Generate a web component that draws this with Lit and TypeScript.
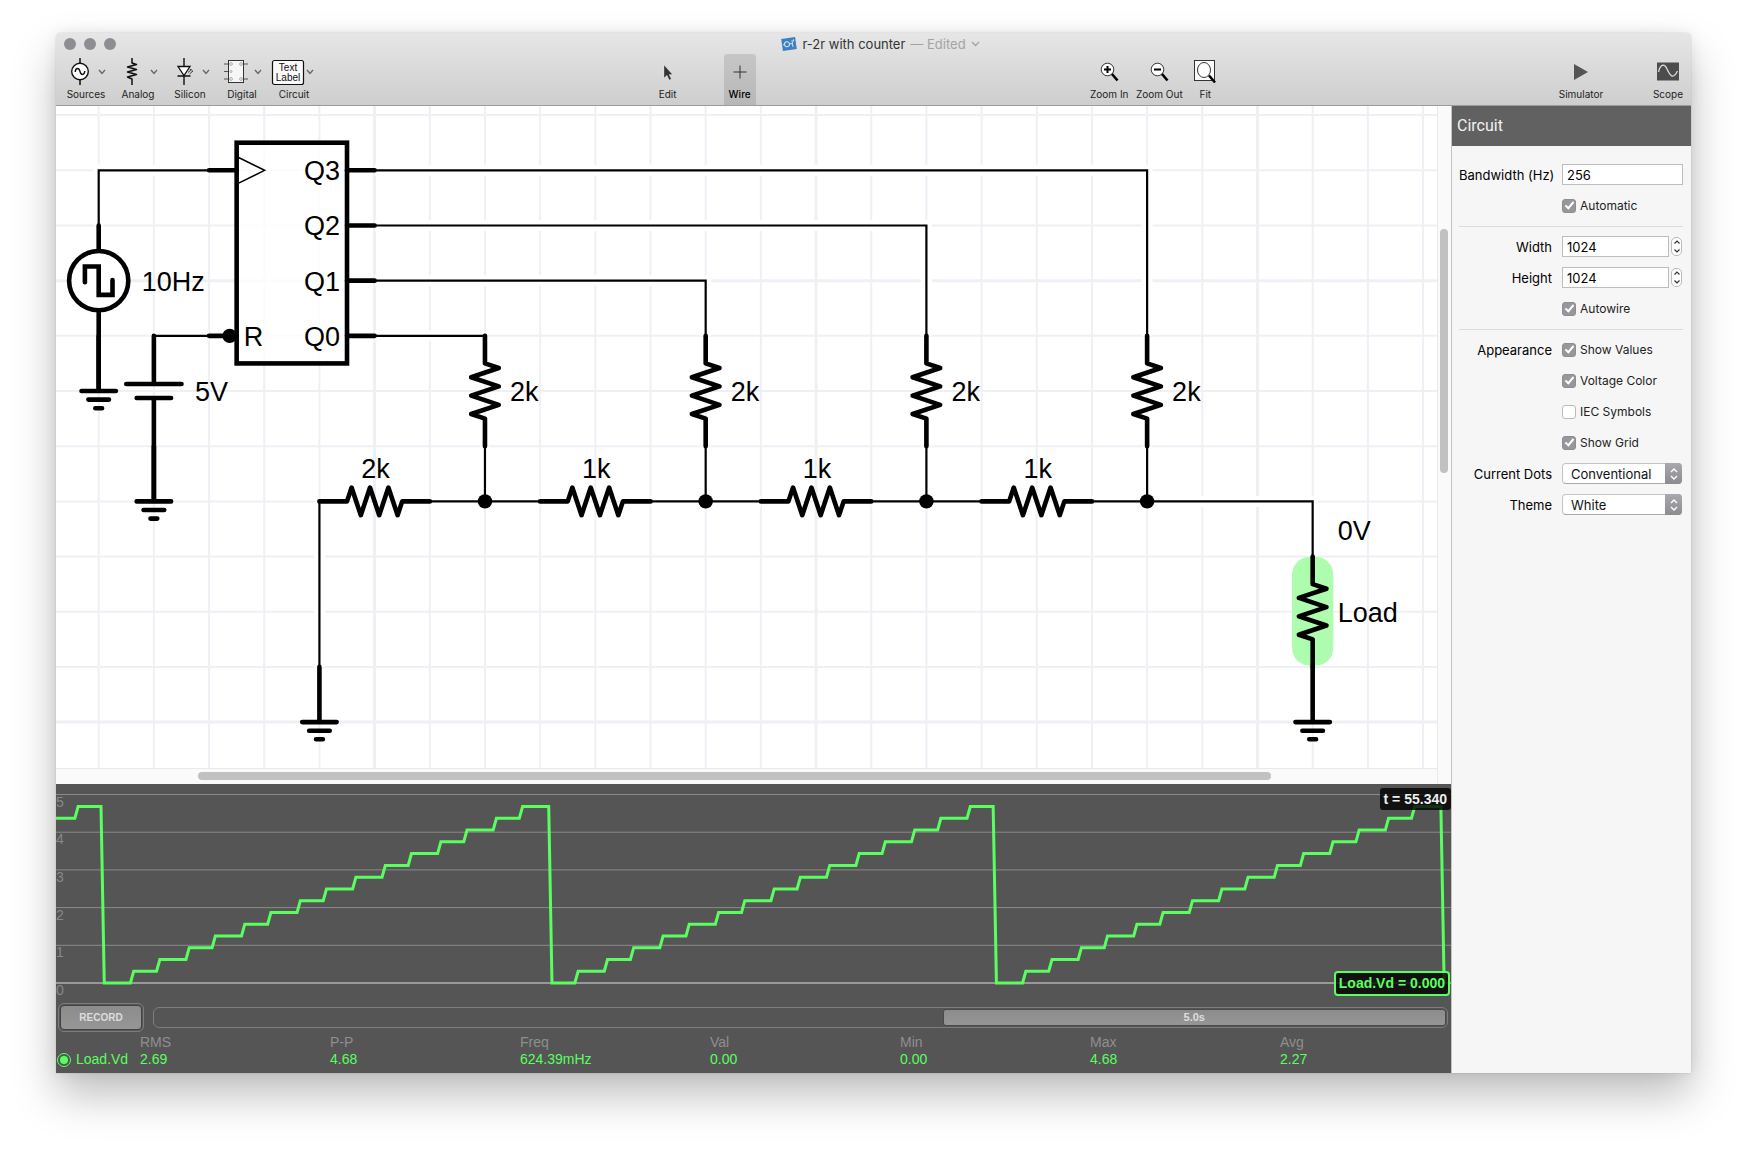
import { LitElement, html, svg, css } from "lit";
import { customElement, property, state } from "lit/decorators.js";
import { classMap } from "lit/directives/class-map.js";

const icons: Record<string, unknown> = {
  sources: svg`
    <path d="M18 0V5M18 22V27" stroke="#111" stroke-width="1.5"/>
    <circle cx="18" cy="13.5" r="8.3" fill="#fff" stroke="#111" stroke-width="1.4"/>
    <path d="M13.2 14C13.6 9.5 17 9.5 18 13.5S22.4 17.5 22.8 13" fill="none" stroke="#111" stroke-width="1.4"/>`,
  analog: svg`
    <path d="M18 0V5L22.5 6.5L13.5 9L22.5 11.5L13.5 14L22.5 16.5L13.5 19L18 21V27"
      fill="none" stroke="#111" stroke-width="1.5" stroke-linejoin="round"/>`,
  silicon: svg`
    <path d="M18 0V27M11.5 18H24.5" stroke="#111" stroke-width="1.4"/>
    <path d="M12 8.5H24L18 17.5Z" fill="#fff" stroke="#111" stroke-width="1.3"/>
    <path d="M22 14.5L25.5 11.5M23.5 16L27 13M25.5 11.5H23.8M27 13H25.4" fill="none" stroke="#444" stroke-width="1"/>`,
  digital: svg`
    <path d="M6 6H30M6 13.5H11M6 21H30" stroke="#555" stroke-width="1"/>
    <rect x="10.5" y="2.5" width="15" height="22" fill="#f6f6f6" stroke="#333" stroke-width="1"/>
    <g fill="none" stroke="#999" stroke-width=".8">
      <circle cx="13" cy="6" r="1.4"/><circle cx="13" cy="13.5" r="1"/><circle cx="13" cy="21" r="1.4"/>
      <circle cx="23" cy="6" r="1.4"/><circle cx="23" cy="21" r="1.4"/>
    </g>`,
  circuit: svg`
    <rect x="2.5" y="2.5" width="31" height="24" rx="2" fill="#fafafa" stroke="#111" stroke-width="1.2"/>
    <text x="18" y="13" class="tiny">Text</text>
    <text x="18" y="23" class="tiny">Label</text>`,
  edit: svg`
    <path d="M14 7V20L17 17.3L19.2 22L21.3 21L19.2 16.5H22.5Z" fill="#333" stroke="#fff" stroke-opacity=".5" stroke-width=".6"/>`,
  wire: svg`<path d="M18 7.5V20.5M11.5 14H24.5" stroke="#333" stroke-width="1"/>`,
  zoomIn: svg`
    <circle cx="16.5" cy="11.5" r="6.3" fill="#fff" stroke="#333" stroke-width="1"/>
    <path d="M21 16L26.5 22.5" stroke="#000" stroke-width="2.6"/>
    <path d="M13 11.5H20M16.5 8V15" stroke="#000" stroke-width="2"/>`,
  zoomOut: svg`
    <circle cx="16.5" cy="11.5" r="6.3" fill="#fff" stroke="#333" stroke-width="1"/>
    <path d="M21 16L26.5 22.5" stroke="#000" stroke-width="2.6"/>
    <path d="M13 11.5H20" stroke="#000" stroke-width="2"/>`,
  fit: svg`
    <rect x="7.5" y="2.5" width="20" height="20" fill="#fafafa" stroke="#333"/>
    <ellipse cx="17" cy="12" rx="6.5" ry="7.5" fill="#fff" stroke="#333" stroke-width="1"/>
    <path d="M22 17.5L28 24.5" stroke="#000" stroke-width="2.6"/>`,
  simulator: svg`<path d="M11 6L25 14L11 22Z" fill="#555"/>`,
  scope: svg`
    <rect x="7" y="4.500" width="22" height="18" fill="#4c4c4c"/>
    <path d="M8.500 14C10 7 14 4.500 17 11S23 22 27.500 13" fill="none" stroke="#ddd" stroke-width="1.3"/>`,
};

@customElement("tool-button")
export class ToolButton extends LitElement {
  @property() icon = "";
  @property() label = "";
  @property({ type: Boolean }) menu = false;
  @property({ type: Boolean }) active = false;

  static styles = css`
    :host {
      display: flex;
    }
    button {
      display: flex;
      flex-direction: column;
      align-items: center;
      justify-content: flex-end;
      gap: 1px;
      width: 100%;
      height: 51px;
      padding: 0 0 4px;
      border: 0;
      border-radius: 3px 3px 0 0;
      background: none;
      color: #222;
      font: 10px/14px Inter, Roboto, sans-serif;
      white-space: nowrap;
    }
    .active {
      background: rgba(0, 0, 0, 0.11);
      color: #000;
      font-weight: 500;
    }
    .row {
      display: flex;
      align-items: center;
    }
    .menu .row {
      padding-right: 4px;
    }
    svg {
      display: block;
      overflow: visible;
    }
    .tiny {
      font: 10px "Liberation Sans", sans-serif;
      text-anchor: middle;
      fill: #111;
    }
  `;

  render() {
    return html`
      <button class=${classMap({ active: this.active, menu: this.menu })}>
        <span class="row">
          <svg width="36" height="28" aria-hidden="true">${icons[this.icon]}</svg>
          ${this.menu
            ? html`<svg width="8" height="6" aria-hidden="true">
                <path d="M1 1L4 4.5L7 1" fill="none" stroke="#666" stroke-width="1.3" />
              </svg>`
            : ""}
        </span>
        ${this.label}
      </button>
    `;
  }
}

// schematic grid: pitch and position of the first crossing
const U = 55.18;
const X0 = 42.7;
const Y0 = 64.3;
const gx = (k: number) => X0 + k * U;
const gy = (k: number) => Y0 + k * U;

type Point = [number, number];

const wires: Point[][] = [
  [[0, 1], [0, 0], [2, 0]],
  [[1, 3], [2, 3]],
  [[5, 0], [19, 0], [19, 3]],
  [[5, 1], [15, 1], [15, 3]],
  [[5, 2], [11, 2], [11, 3]],
  [[5, 3], [7, 3]],
  [[7, 5], [7, 6]],
  [[11, 5], [11, 6]],
  [[15, 5], [15, 6]],
  [[19, 5], [19, 6]],
  [[6, 6], [8, 6]],
  [[10, 6], [12, 6]],
  [[14, 6], [16, 6]],
  [[18, 6], [22, 6], [22, 7]],
  [[4, 6], [4, 9]],
];

const wirePath = wires
  .map((w) => "M" + w.map(([x, y]) => `${gx(x)} ${gy(y)}`).join("L"))
  .join("");

@customElement("circuit-canvas")
export class CircuitCanvas extends LitElement {
  static styles = css`
    :host {
      display: grid;
      grid-template-columns: minmax(0, 1fr) 14px;
      grid-template-rows: minmax(0, 1fr) 16px;
      background: #fff;
    }
    svg {
      display: block;
      width: 100%;
      height: 100%;
    }
    .grid {
      stroke: #eff0f5;
      stroke-width: 2;
    }
    .grid .major {
      stroke-width: 3;
    }
    .halo {
      fill: none;
      stroke: #fff;
      stroke-width: 11;
    }
    .wire {
      fill: none;
      stroke: #000;
      stroke-width: 2.2;
    }
    .part {
      fill: none;
      stroke: #000;
      stroke-width: 4.6;
      stroke-linecap: round;
      stroke-linejoin: round;
    }
    .body {
      fill: #fff;
    }
    .square {
      stroke-linejoin: miter;
    }
    text {
      font: 27px "Liberation Sans", Arial, sans-serif;
    }
    .middle {
      text-anchor: middle;
    }
    .end {
      text-anchor: end;
    }
    .bar {
      background: #fafafa;
      display: flex;
    }
    .vertical {
      border-left: 1px solid #e9e9e9;
      padding: 123px 3px 0 2px;
      grid-row: span 2;
    }
    .horizontal {
      border-top: 1px solid #e9e9e9;
      padding: 3px 0 4px 142px;
    }
    .thumb {
      background: #c1c1c1;
      border-radius: 4px;
    }
    .vertical .thumb {
      width: 8px;
      height: 244px;
    }
    .horizontal .thumb {
      width: 86.6%;
      height: 8px;
    }
  `;

  grid() {
    const lines = [];
    for (let k = 0; k < 40; k++) {
      lines.push(svg`<line class=${k % 8 === 5 ? "major" : ""} x1=${gx(k)} x2=${gx(k)} y1="0" y2="100%"/>`);
    }
    for (let k = -1; k < 30; k++) {
      lines.push(svg`<line class=${k % 8 === 2 ? "major" : ""} y1=${gy(k)} y2=${gy(k)} x1="0" x2="100%"/>`);
    }
    return svg`<g class="grid">${lines}</g>`;
  }

  at(x: number, y: number, content: unknown, angle = 0) {
    return svg`<g transform="translate(${gx(x)} ${gy(y)}) rotate(${angle})">${content}</g>`;
  }

  resistor(x: number, y: number, label: string, angle = 0) {
    const body = svg`<path class="part" d="M0 -55.2V-27.6L13.8 -23L-13.8 -13.8L13.8 -4.6L-13.8 4.6L13.8 13.8L-13.8 23L0 27.6V55.2"/>`;
    const text = angle
      ? svg`<text class="middle" x="1" y="-23">${label}</text>`
      : svg`<text x="25" y="10">${label}</text>`;
    return svg`${this.at(x, y, body, angle)}${this.at(x, y, text)}`;
  }

  ground(x: number, y: number) {
    return this.at(x, y, svg`<path class="part" d="M0 -55.2V0M-17.2 0H17.2M-10.3 8.6H10.3M-3.4 17.2H3.4"/>`);
  }

  dot(x: number, y: number) {
    return this.at(x, y, svg`<circle r="7.2"/>`);
  }

  render() {
    return html`
      <svg role="img" aria-label="Schematic">
        ${this.grid()}
        <path class="halo" d=${wirePath}></path>
        <path class="wire" d=${wirePath}></path>

        ${this.at(0, 2, svg`
          <path class="part" d="M0 -55.2V-30M0 30V110"/>
          <circle class="part body" r="29.6"/>
          <path class="part square" d="M-13.8 1.5V-14.2H0V14.2H13.8V-.5"/>
          <text x="43" y="10">10Hz</text>`)}
        ${this.ground(0, 4)}

        ${this.at(1, 4, svg`
          <path class="part" d="M0 -55.2V-7M-27.6 -7H27.6M-17.2 7H17.2M0 7V110"/>
          <text x="41" y="10">5V</text>`)}
        ${this.ground(1, 6)}

        <rect x=${gx(2.5)} y=${gy(-0.5)} width=${2 * U} height=${4 * U}
          fill="#fff" fill-opacity=".8" stroke="#000" stroke-width="4.6"></rect>
        ${[0, 1, 2, 3].map((k) => this.at(4.5, k, svg`
          <path class="part" d="M0 0H27.6"/>
          <text class="end" x="-7" y="10">Q${3 - k}</text>`))}
        ${this.at(2.5, 0, svg`
          <path class="part" d="M-27.6 0H0"/>
          <path d="M2 -12.8L28 0L2 12.8" fill="none" stroke="#000" stroke-width="1.5"/>`)}
        ${this.at(2.5, 3, svg`
          <path class="part" d="M-27.6 0H0"/>
          <circle cx="-7" r="7.2"/>
          <text x="7" y="10">R</text>`)}

        ${[7, 11, 15, 19].map((k) => svg`${this.resistor(k, 4, "2k")}${this.dot(k, 6)}`)}
        ${this.resistor(5, 6, "2k", -90)}
        ${[9, 13, 17].map((k) => this.resistor(k, 6, "1k", -90))}
        ${this.ground(4, 10)}

        ${this.at(22, 8, svg`<rect x="-20.6" y="-55" width="41.2" height="109" rx="18" fill="#aefcae"/>`)}
        ${this.resistor(22, 8, "Load")}
        ${this.ground(22, 10)}
        ${this.at(22, 7, svg`<text x="25" y="-17">0V</text>`)}
      </svg>
      <div class="bar vertical"><div class="thumb"></div></div>
      <div class="bar horizontal"><div class="thumb"></div></div>
    `;
  }
}

// how many samples the counter stays on each step, one row per sweep
const dwell = [
  [9, 8, 9, 8, 9, 8, 9, 8, 9, 9, 8, 9, 8, 9, 8, 9],
  [8, 9, 8, 9, 8, 9, 8, 9, 8, 9, 9, 8, 9, 8, 9, 8],
  [9, 8, 9, 8, 9, 8, 9, 9, 8, 9, 8, 9, 8, 9, 8, 9],
];
const SAMPLE = 3.268;
const ZERO = 199;
const VOLT = 37.7;
const level = (n: number) => ZERO - n * 0.312 * VOLT;

function trace() {
  let x = 45;
  const points = [[0, level(14)], [x - 8 * SAMPLE, level(14)], [x - 7 * SAMPLE, level(15)], [x, level(15)]];
  for (const sweep of dwell) {
    sweep.forEach((n, i) => {
      points.push([x + SAMPLE, level(i)]);
      x += n * SAMPLE;
      points.push([x, level(i)]);
    });
  }
  points.push([x + SAMPLE, ZERO]);
  return points.map((p) => p.join(",")).join(" ");
}

const stats = [
  ["RMS", "2.69"],
  ["P-P", "4.68"],
  ["Freq", "624.39mHz"],
  ["Val", "0.00"],
  ["Min", "0.00"],
  ["Max", "4.68"],
  ["Avg", "2.27"],
];

@customElement("scope-panel")
export class ScopePanel extends LitElement {
  static styles = css`
    :host {
      display: block;
      background: #555;
      color: #8f8f8f;
      font: 14px/17px "Liberation Sans", Arial, sans-serif;
    }
    .plot {
      position: relative;
    }
    .plot svg {
      display: block;
      width: 100%;
      height: 217px;
    }
    .plot text {
      fill: #888;
    }
    line {
      stroke: #8a8a8a;
      stroke-width: 1;
    }
    .zero {
      stroke: #ddd;
    }
    polyline {
      fill: none;
      stroke: #5aff5f;
      stroke-width: 3;
    }
    .badge {
      position: absolute;
      right: 1px;
      padding: 3px 4px 2px;
      border-radius: 3px;
      background: rgba(0, 0, 0, 0.8);
      color: #eee;
      font-weight: bold;
    }
    .time {
      top: 4px;
      right: 0;
    }
    .value {
      top: 187px;
      padding: 2px 3px;
      border: 2px solid #5aff5f;
      border-radius: 4px;
      color: #5aff5f;
    }
    .controls {
      display: flex;
      align-items: center;
      gap: 9px;
      padding: 0 3px 0 2px;
      height: 32px;
    }
    .ring {
      border: 1px solid #7d7d7d;
      border-radius: 6px;
      padding: 1px;
    }
    button {
      display: block;
      width: 82px;
      height: 25px;
      border: 1px solid #444;
      border-radius: 4px;
      background: linear-gradient(#8c8c8c, #969696);
      color: #ddd;
      font: bold 10px "Liberation Sans", Arial, sans-serif;
    }
    .track {
      flex: 1;
      display: flex;
      justify-content: flex-end;
      box-sizing: border-box;
      height: 21px;
      padding: 1px;
    }
    .span {
      width: 39%;
      border: 1px solid #4a4a4a;
      border-radius: 3px;
      background: linear-gradient(#8c8c8c, #969696);
      color: #ddd;
      font: bold 11px/15px "Liberation Sans", Arial, sans-serif;
      text-align: center;
      box-sizing: border-box;
    }
    table {
      width: 100%;
      table-layout: fixed;
      border-collapse: collapse;
      margin-top: 1px;
      margin-bottom: 5px;
    }
    th,
    td {
      padding: 0;
      text-align: left;
      font-weight: normal;
    }
    col.metric {
      width: 190px;
    }
    col.name {
      width: 84px;
    }
    tbody {
      color: #5aff5f;
    }
    label {
      display: flex;
      align-items: center;
      gap: 5px;
      padding-left: 1px;
    }
    input {
      appearance: none;
      display: grid;
      place-items: center;
      box-sizing: border-box;
      width: 14px;
      height: 14px;
      margin: 0;
      border: 1px solid #5aff5f;
      border-radius: 50%;
    }
    input:checked::before {
      content: "";
      width: 8px;
      height: 8px;
      border-radius: 50%;
      background: #5aff5f;
    }
  `;

  render() {
    return html`
      <div class="plot">
        <svg role="img" aria-label="Load.Vd over time">
          ${[0, 1, 2, 3, 4, 5].map((v) => svg`
            <text x="0" y=${ZERO - v * VOLT + 12}>${v}</text>
            <line class=${v ? "" : "zero"} x1="0" x2="100%" y1=${ZERO - v * VOLT} y2=${ZERO - v * VOLT}/>`)}
          <polyline points=${trace()}></polyline>
        </svg>
        <div class="badge time">t = 55.340</div>
        <div class="badge value">Load.Vd = 0.000</div>
      </div>
      <div class="controls">
        <div class="ring"><button>RECORD</button></div>
        <div class="ring track"><div class="span">5.0s</div></div>
      </div>
      <table>
        <colgroup>
          <col class="name" />
          ${stats.slice(1).map(() => html`<col class="metric" />`)}
          <col />
        </colgroup>
        <thead>
          <tr>
            <td></td>
            ${stats.map(([name]) => html`<th scope="col">${name}</th>`)}
          </tr>
        </thead>
        <tbody>
          <tr>
            <th scope="row">
              <label><input type="radio" name="trace" checked />Load.Vd</label>
            </th>
            ${stats.map(([, value]) => html`<td>${value}</td>`)}
          </tr>
        </tbody>
      </table>
    `;
  }
}

@customElement("circuit-inspector")
export class CircuitInspector extends LitElement {
  @state() size = { width: 1024, height: 1024 };

  static styles = css`
    :host {
      display: block;
      background: #f6f6f6;
      border-left: 1px solid #c4c4c4;
      color: #000;
      font: 13px/20px Inter, Roboto, sans-serif;
    }
    h2 {
      margin: 0 0 13px;
      padding: 0 5px;
      background: #616161;
      color: #f2f2f2;
      font: 16px/40px Roboto, sans-serif;
    }
    .group {
      margin: 0 8px 0 7px;
      padding-bottom: 5px;
    }
    .group + .group {
      border-top: 1px solid #dcdcdc;
      padding-top: 4px;
    }
    .row {
      display: grid;
      grid-template-columns: 93px minmax(0, 1fr);
      column-gap: 10px;
      align-items: center;
      height: 31px;
    }
    .name {
      text-align: right;
      white-space: nowrap;
    }
    .field {
      display: flex;
      align-items: center;
      gap: 2px;
      margin-right: 1px;
    }
    .field.wide {
      margin-right: 0;
    }
    input[type="text"] {
      flex: 1;
      min-width: 0;
      box-sizing: border-box;
      height: 21px;
      padding: 0 4px;
      border: 1px solid #bdbdbd;
      background: #fff;
      font: inherit;
    }
    .check {
      display: flex;
      align-items: center;
      gap: 4px;
      grid-column: 2;
      font-size: 12px;
      color: #222;
    }
    input[type="checkbox"] {
      appearance: none;
      display: grid;
      place-items: center;
      box-sizing: border-box;
      width: 14px;
      height: 14px;
      margin: 0;
      border: 1px solid #bbb;
      border-radius: 3px;
      background: #fff;
    }
    input[type="checkbox"]:checked {
      border-color: #8e8d92;
      background: #98979c;
    }
    input[type="checkbox"]:checked::before {
      content: "";
      width: 3px;
      height: 7px;
      margin-bottom: 2px;
      border: solid #fff;
      border-width: 0 2px 2px 0;
      transform: rotate(40deg);
    }
    .stepper {
      display: flex;
      flex-direction: column;
      box-sizing: border-box;
      width: 11px;
      height: 19px;
      border: 1px solid #bbb;
      border-radius: 5px;
      background: #fff;
    }
    .stepper button {
      flex: 1;
      display: grid;
      place-items: center;
      padding: 0;
      border: 0;
      background: none;
    }
    .popup {
      position: relative;
      margin-right: 1px;
    }
    select {
      appearance: none;
      display: block;
      width: 100%;
      box-sizing: border-box;
      height: 21px;
      padding: 0 24px 0 8px;
      border: 1px solid #c4c4c4;
      border-bottom-color: #aaa;
      border-radius: 4px;
      background: #fff;
      color: #111;
      font: inherit;
    }
    .arrows {
      position: absolute;
      inset: 0 0 0 auto;
      width: 17px;
      display: grid;
      place-items: center;
      border-radius: 0 4px 4px 0;
      background: linear-gradient(#a9a9ad, #8c8c90);
      pointer-events: none;
    }
    svg {
      display: block;
    }
  `;

  check(label: string, checked = true) {
    return html`<label class="check"><input type="checkbox" .checked=${checked} />${label}</label>`;
  }

  step(key: "width" | "height", by: number) {
    this.size = { ...this.size, [key]: this.size[key] + by };
  }

  sizeRow(key: "width" | "height", label: string) {
    return html`
      <div class="row">
        <label class="name" for=${key}>${label}</label>
        <div class="field">
          <input id=${key} type="text" .value=${String(this.size[key])} />
          <div class="stepper">
            <button aria-label="Increase" @click=${() => this.step(key, 1)}>
              <svg width="6" height="4"><path d="M.5 3.5L3 1L5.5 3.5" fill="none" stroke="#333" stroke-width="1.2" /></svg>
            </button>
            <button aria-label="Decrease" @click=${() => this.step(key, -1)}>
              <svg width="6" height="4"><path d="M.5 .5L3 3L5.5 .5" fill="none" stroke="#333" stroke-width="1.2" /></svg>
            </button>
          </div>
        </div>
      </div>
    `;
  }

  popup(id: string, label: string, options: string[]) {
    return html`
      <div class="row">
        <label class="name" for=${id}>${label}</label>
        <div class="popup">
          <select id=${id}>
            ${options.map((o) => html`<option>${o}</option>`)}
          </select>
          <span class="arrows">
            <svg width="8" height="12">
              <path d="M1 4L4 1L7 4M1 8L4 11L7 8" fill="none" stroke="#fff" stroke-width="1.4" />
            </svg>
          </span>
        </div>
      </div>
    `;
  }

  render() {
    return html`
      <h2>Circuit</h2>
      <div class="group">
        <div class="row">
          <label class="name" for="bandwidth">Bandwidth (Hz)</label>
          <div class="field wide"><input id="bandwidth" type="text" value="256" /></div>
        </div>
        <div class="row">${this.check("Automatic")}</div>
      </div>
      <div class="group">
        ${this.sizeRow("width", "Width")} ${this.sizeRow("height", "Height")}
        <div class="row">${this.check("Autowire")}</div>
      </div>
      <div class="group">
        <div class="row">
          <span class="name">Appearance</span>
          ${this.check("Show Values")}
        </div>
        <div class="row">${this.check("Voltage Color")}</div>
        <div class="row">${this.check("IEC Symbols", false)}</div>
        <div class="row">${this.check("Show Grid")}</div>
        ${this.popup("dots", "Current Dots", ["Conventional", "Electron Flow", "Off"])}
        ${this.popup("theme", "Theme", ["White", "Black"])}
      </div>
    `;
  }
}

@customElement("app-root")
export class AppRoot extends LitElement {
  static styles = css`
    :host {
      display: block;
      box-sizing: border-box;
      height: 100vh;
      padding: 33px 56px 80px;
      background: #fff;
      font-family: Inter, Roboto, sans-serif;
    }
    .window {
      display: flex;
      flex-direction: column;
      height: 100%;
      border-radius: 5px 5px 0 0;
      box-shadow: 0 0 1px rgba(0, 0, 0, 0.4), 0 0 14px rgba(0, 0, 0, 0.08),
        0 22px 44px rgba(0, 0, 0, 0.26);
    }
    header {
      box-sizing: border-box;
      height: 73px;
      border-bottom: 1px solid #9b9b9b;
      border-radius: 5px 5px 0 0;
      background: linear-gradient(#e6e6e6, #cecece);
    }
    .titlebar {
      display: grid;
      grid-template-columns: 60px 1fr 46px;
      align-items: center;
      height: 21px;
      padding: 0 8px;
    }
    .lights {
      display: flex;
      gap: 8px;
    }
    .lights button {
      width: 12px;
      height: 12px;
      padding: 0;
      border: 0;
      border-radius: 50%;
      background: #8e8d92;
    }
    .title {
      display: flex;
      justify-content: center;
      align-items: center;
      gap: 5px;
      color: #a3a3a3;
      font-size: 13px;
      line-height: 20px;
    }
    h1 {
      margin: 0;
      color: #333;
      font: inherit;
    }
    nav {
      display: flex;
      justify-content: space-between;
      padding: 0 5px 0 4px;
    }
    .tools {
      display: flex;
    }
    .tools tool-button {
      width: 52px;
    }
    .modes {
      gap: 40px;
    }
    .modes tool-button {
      width: 32px;
    }
    .zoom {
      gap: 2px;
    }
    .zoom tool-button:first-child {
      width: 44px;
    }
    .zoom tool-button:last-child {
      width: 36px;
    }
    .views {
      gap: 43px;
    }
    .views tool-button:last-child {
      width: 36px;
    }
    main {
      flex: 1;
      min-height: 0;
      display: grid;
      grid-template-columns: minmax(0, 1fr) 240px;
    }
    .work {
      display: grid;
      grid-template-rows: minmax(0, 1fr) auto;
      min-height: 0;
    }
    circuit-canvas {
      min-height: 0;
    }
    circuit-inspector {
      box-sizing: border-box;
    }
  `;

  render() {
    return html`
      <div class="window">
        <header>
          <div class="titlebar">
            <div class="lights">
              <button aria-label="Close"></button>
              <button aria-label="Minimize"></button>
              <button aria-label="Zoom"></button>
            </div>
            <div class="title">
              <svg width="16" height="16" aria-hidden="true">
                <g transform="rotate(-8 8 8)">
                  <rect x="1" y="2" width="14" height="12" fill="#3d80c0" />
                  <path d="M2 8H4M8 8H11M11.5 4.5V11.5M13 4V6" stroke="#cfe3f5" stroke-width="1" />
                  <circle cx="6" cy="8" r="2.5" fill="none" stroke="#cfe3f5" />
                </g>
              </svg>
              <h1>r-2r with counter</h1>
              — Edited
              <svg width="9" height="6" aria-hidden="true">
                <path d="M1 1L4.5 4.5L8 1" fill="none" stroke="#a3a3a3" stroke-width="1.4" />
              </svg>
            </div>
          </div>
          <nav>
            <div class="tools">
              <tool-button icon="sources" label="Sources" menu></tool-button>
              <tool-button icon="analog" label="Analog" menu></tool-button>
              <tool-button icon="silicon" label="Silicon" menu></tool-button>
              <tool-button icon="digital" label="Digital" menu></tool-button>
              <tool-button icon="circuit" label="Circuit" menu></tool-button>
            </div>
            <div class="tools modes">
              <tool-button icon="edit" label="Edit"></tool-button>
              <tool-button icon="wire" label="Wire" active></tool-button>
            </div>
            <div class="tools zoom">
              <tool-button icon="zoomIn" label="Zoom In"></tool-button>
              <tool-button icon="zoomOut" label="Zoom Out"></tool-button>
              <tool-button icon="fit" label="Fit"></tool-button>
            </div>
            <div class="tools views">
              <tool-button icon="simulator" label="Simulator"></tool-button>
              <tool-button icon="scope" label="Scope"></tool-button>
            </div>
          </nav>
        </header>
        <main>
          <div class="work">
            <circuit-canvas></circuit-canvas>
            <scope-panel></scope-panel>
          </div>
          <circuit-inspector></circuit-inspector>
        </main>
      </div>
    `;
  }
}
